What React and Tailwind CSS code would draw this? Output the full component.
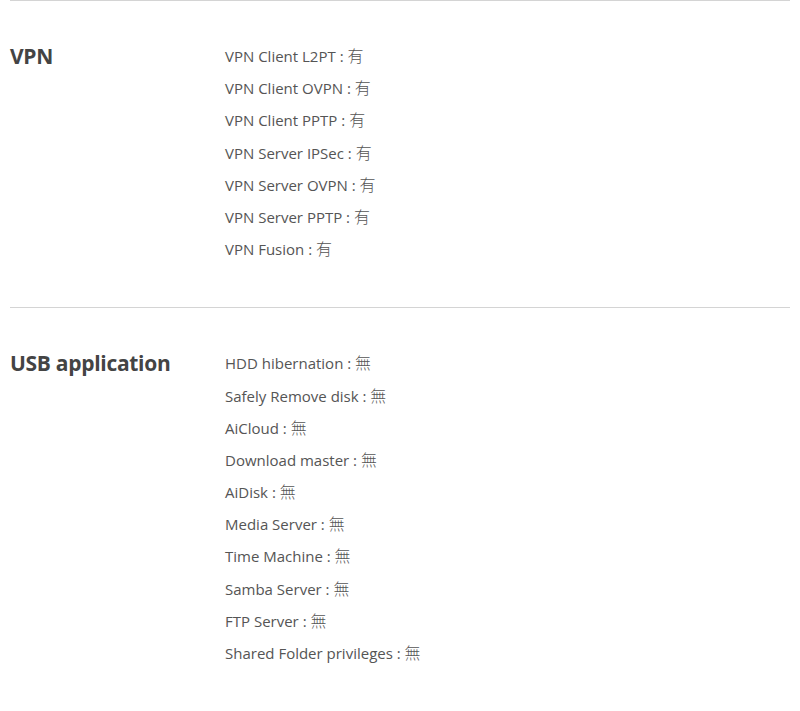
const sections = [
  {
    title: "VPN",
    items: [
      ["VPN Client L2PT", "有"],
      ["VPN Client OVPN", "有"],
      ["VPN Client PPTP", "有"],
      ["VPN Server IPSec", "有"],
      ["VPN Server OVPN", "有"],
      ["VPN Server PPTP", "有"],
      ["VPN Fusion", "有"],
    ],
  },
  {
    title: "USB application",
    items: [
      ["HDD hibernation", "無"],
      ["Safely Remove disk", "無"],
      ["AiCloud", "無"],
      ["Download master", "無"],
      ["AiDisk", "無"],
      ["Media Server", "無"],
      ["Time Machine", "無"],
      ["Samba Server", "無"],
      ["FTP Server", "無"],
      ["Shared Folder privileges", "無"],
    ],
  },
]

export default function App() {
  return (
    <div className="min-h-screen bg-white px-[10px] font-['Open_Sans','Noto_Sans_CJK_TC',sans-serif]">
      {sections.map((s) => (
        <div key={s.title} className="flex border-t border-[#d4d4d4] pt-[39px] pb-[42px]">
          <h2 className="w-[215px] shrink-0 text-[21px] font-bold leading-[32px] text-[#444] tracking-[-0.3px]">
            {s.title}
          </h2>
          <ul className="text-[15px] leading-[32.2px] text-[#555]">
            {s.items.map(([label, val]) => (
              <li key={label} className="h-[32.2px]">
                {label} : <span className="font-['Noto_Sans_CJK_TC',sans-serif] font-light text-[16px] leading-none">{val}</span>
              </li>
            ))}
          </ul>
        </div>
      ))}
    </div>
  )
}
